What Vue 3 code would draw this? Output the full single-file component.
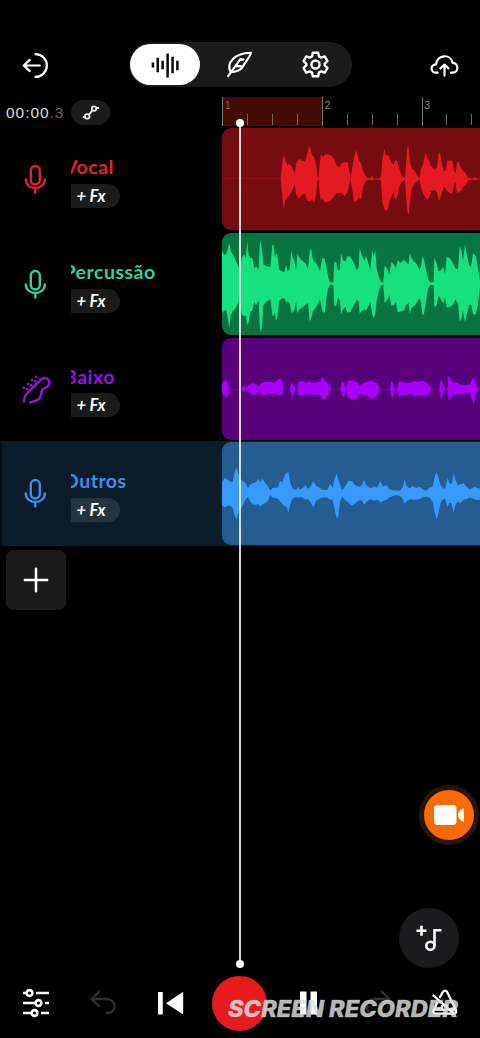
<script setup>
// Each waveform is a list of [x, top, bottom] samples, three units per pixel.
const tracks = [
  {
    name: 'Vocal', icon: 'mic', color: '#e4222f', shift: -6.5, clip: '#750c10', wave: '#e51a20', box: '6 9 774 306',
    points: [
      [6, 161, 162], [182, 161, 162], [186, 120, 205], [191, 91, 250], [196, 103, 225], [202, 122, 216], [208, 116, 210], [215, 124, 200], [221, 138, 186], [224, 146, 176],
      [229, 112, 208], [237, 102, 221], [245, 106, 210], [255, 110, 204], [260, 92, 226], [268, 61, 229], [276, 90, 222], [282, 96, 233], [288, 120, 208], [293, 158, 164],
      [296, 158, 164], [299, 118, 206], [303, 85, 226], [308, 96, 218], [313, 90, 230], [323, 87, 231], [333, 91, 225], [341, 100, 214], [349, 120, 205], [358, 127, 203],
      [365, 113, 204], [374, 112, 213], [383, 111, 199], [388, 142, 177], [392, 159, 164], [398, 122, 200], [402, 96, 228], [409, 75, 229], [416, 104, 216], [423, 115, 222],
      [430, 139, 183], [439, 157, 166], [450, 160, 163], [456, 153, 167], [460, 160, 163], [479, 160, 163], [483, 152, 170], [487, 105, 230], [493, 72, 251], [498, 92, 257],
      [504, 89, 251], [508, 98, 228], [515, 113, 211], [521, 120, 201], [525, 108, 222], [531, 107, 218], [538, 131, 183], [545, 153, 170], [555, 158, 165], [559, 106, 222],
      [562, 66, 258], [566, 68, 269], [571, 116, 221], [576, 131, 189], [584, 136, 176], [592, 153, 168], [599, 160, 163], [603, 132, 187], [609, 119, 205], [616, 83, 215],
      [622, 102, 224], [628, 105, 216], [633, 124, 199], [643, 132, 195], [651, 127, 201], [656, 82, 226], [660, 84, 222], [666, 119, 201], [672, 138, 184], [677, 137, 188],
      [682, 106, 199], [697, 107, 207], [702, 137, 178], [707, 146, 172], [711, 112, 204], [715, 110, 202], [722, 129, 198], [730, 138, 184], [738, 147, 180], [744, 158, 165], [762, 160, 163], [765, 156, 166], [770, 160, 163], [780, 160, 163],
    ],
  },
  {
    name: 'Percussão', icon: 'mic', color: '#32cf99', shift: -7, clip: '#08743f', wave: '#17e081', box: '6 8 774 307',
    points: [
      [6, 61, 250], [13, 73, 241], [19, 71, 240], [25, 49, 275], [28, 38, 294], [32, 60, 255], [40, 76, 240], [47, 90, 234], [54, 106, 220], [60, 123, 211], [65, 82, 252], [72, 72, 258],
      [78, 82, 255], [82, 33, 286], [86, 74, 276], [91, 84, 245], [97, 83, 240], [103, 115, 215], [108, 109, 226], [116, 117, 211], [119, 48, 285], [122, 30, 305], [126, 58, 292], [130, 102, 225], [140, 108, 214],
      [151, 110, 208], [157, 43, 256], [161, 45, 258], [165, 82, 247], [168, 69, 272], [172, 71, 263], [177, 118, 212], [186, 123, 204], [193, 125, 205], [198, 104, 216], [203, 124, 213], [209, 115, 219],
      [214, 59, 245], [218, 83, 248], [223, 91, 239], [228, 119, 212], [232, 71, 249], [237, 81, 239], [248, 93, 231], [257, 99, 223], [264, 118, 218], [269, 64, 274], [273, 54, 266], [279, 89, 243], [291, 103, 226],
      [300, 122, 207], [307, 82, 244], [314, 86, 248], [321, 119, 191], [325, 143, 172], [331, 157, 163], [340, 156, 165], [343, 93, 229], [349, 99, 225], [354, 121, 201], [360, 118, 210], [363, 69, 252], [369, 89, 238],
      [376, 94, 229], [382, 78, 247], [391, 79, 245], [401, 97, 226], [410, 119, 210], [416, 111, 213], [419, 53, 251], [425, 75, 242], [433, 91, 239], [439, 76, 241], [445, 99, 228], [451, 119, 215], [457, 60, 254], [461, 77, 263], [466, 62, 251],
      [470, 115, 214], [475, 135, 187], [483, 156, 165], [490, 156, 164], [494, 106, 219], [501, 114, 211], [508, 134, 194], [514, 95, 226], [522, 103, 224], [528, 114, 215], [533, 89, 246], [541, 98, 244], [552, 89, 240], [558, 95, 224],
      [566, 103, 218], [569, 68, 251], [575, 84, 234], [583, 95, 226], [590, 101, 218], [598, 119, 204], [603, 109, 216], [607, 78, 254], [612, 89, 251], [618, 116, 212], [624, 148, 175], [631, 157, 164], [641, 155, 164],
      [643, 83, 232], [650, 99, 225], [656, 124, 196], [662, 121, 206], [670, 109, 220], [675, 132, 200], [680, 79, 232], [689, 84, 230], [699, 99, 224], [706, 115, 208], [714, 118, 218], [719, 48, 273], [724, 59, 268],
      [729, 92, 240], [735, 42, 277], [740, 72, 253], [747, 105, 226], [753, 110, 222], [759, 69, 251], [767, 76, 253], [773, 110, 228], [780, 153, 170],
    ],
  },
  {
    name: 'Baixo', icon: 'guitar', color: '#9513dc', shift: -6.5, clip: '#59007b', wave: '#a800fd', box: '6 8 774 307',
    points: [
      [6, 150, 169], [11, 139, 181], [18, 134, 186], [24, 144, 180], [29, 161, 162], [65, 161, 162], [70, 148, 170], [76, 160, 163], [80, 154, 166], [90, 147, 173], [100, 144, 180], [108, 148, 179], [116, 153, 170],
      [124, 145, 177], [132, 142, 180], [143, 139, 176], [152, 140, 177], [165, 142, 176], [174, 133, 179], [182, 130, 180], [188, 141, 178], [190, 161, 162], [210, 161, 162], [213, 148, 174], [219, 143, 187], [224, 156, 168], [226, 161, 162], [233, 161, 162],
      [236, 139, 182], [248, 137, 181], [257, 143, 177], [267, 139, 177], [280, 143, 179], [293, 140, 178], [302, 137, 181], [307, 124, 192], [313, 136, 192], [321, 141, 183], [329, 149, 174], [333, 161, 162], [361, 161, 162], [366, 137, 181], [372, 144, 187], [378, 161, 162],
      [383, 139, 185], [393, 136, 191], [404, 138, 192], [413, 142, 188], [420, 153, 175], [429, 144, 180], [439, 141, 181], [447, 139, 186], [455, 136, 192], [463, 141, 187], [473, 145, 179], [480, 161, 162], [510, 161, 162], [514, 139, 187], [520, 143, 181], [525, 161, 162],
      [531, 158, 165], [537, 138, 187], [548, 142, 178], [563, 144, 179], [574, 142, 175], [583, 137, 184], [592, 140, 180], [602, 137, 179], [611, 138, 182], [622, 143, 179], [631, 153, 173], [634, 161, 162], [658, 161, 162], [663, 132, 193], [669, 146, 177], [675, 161, 162],
      [682, 161, 162], [686, 118, 196], [693, 134, 188], [700, 143, 180], [709, 142, 178], [720, 148, 177], [735, 150, 174], [750, 147, 175], [756, 134, 192], [761, 125, 207], [766, 141, 184], [773, 158, 165], [780, 161, 162],
    ],
  },
  {
    name: 'Outros', icon: 'mic', color: '#3d8ee9', shift: -7.5, clip: '#245d92', wave: '#3898fc', box: '6 12 774 306', selected: true,
    points: [
      [6, 133, 202], [14, 119, 208], [24, 126, 202], [32, 132, 203], [39, 129, 211], [44, 100, 233], [50, 89, 244], [54, 104, 228], [60, 119, 215], [66, 128, 208], [76, 134, 185], [84, 150, 176], [91, 139, 191],
      [100, 135, 200], [109, 131, 199], [116, 123, 199], [121, 133, 206], [127, 122, 199], [135, 133, 195], [142, 142, 191], [151, 157, 171], [158, 150, 178], [167, 149, 180], [174, 148, 182], [180, 128, 190], [187, 133, 198],
      [194, 111, 205], [200, 103, 207], [205, 103, 223], [211, 135, 198], [218, 153, 181], [229, 156, 176], [235, 147, 180], [240, 154, 176], [249, 150, 179], [256, 141, 186], [263, 152, 183], [272, 145, 193], [280, 129, 208], [288, 143, 189], [298, 149, 182], [306, 155, 178],
      [322, 156, 178], [330, 138, 185], [338, 149, 185], [343, 125, 209], [350, 106, 242], [355, 123, 235], [360, 139, 191], [366, 157, 175], [375, 146, 185], [385, 128, 194], [396, 129, 202], [407, 142, 195], [419, 146, 185],
      [426, 140, 188], [432, 124, 200], [438, 140, 193], [448, 148, 184], [456, 150, 185], [462, 145, 189], [471, 148, 184], [481, 129, 194], [489, 145, 189], [500, 141, 185], [508, 153, 178], [520, 157, 174], [529, 157, 171],
      [540, 158, 174], [549, 145, 183], [554, 124, 197], [560, 144, 190], [569, 151, 183], [577, 144, 184], [589, 150, 185], [600, 146, 183], [609, 154, 177], [619, 158, 176], [629, 148, 179], [638, 145, 191], [644, 116, 222], [650, 102, 244], [655, 119, 224], [662, 142, 194],
      [668, 149, 184], [675, 153, 181], [683, 120, 207], [688, 135, 193], [695, 138, 197], [701, 105, 224], [706, 124, 200], [714, 142, 190], [722, 138, 195], [731, 136, 185], [740, 147, 183], [750, 154, 178], [763, 147, 183], [773, 150, 186], [780, 151, 185],
    ],
  },
]

const outline = (points) =>
  [...points.map(([x, t]) => `${x},${t}`), ...[...points].reverse().map(([x, , b]) => `${x},${b}`)].join(' ')

const ticks = Array.from({ length: 11 }, (_, i) => i)
</script>

<template>
  <main class="studio">
    <header class="topbar">
      <svg class="icon back" viewBox="0 0 28 28"><path d="M14 2.3A11.8 11.8 0 0 1 14 25.9M1.8 14H18.5M8 8.2 1.8 14l6.2 5.8" /></svg>
      <nav class="tabs">
        <span class="tab active">
          <svg viewBox="0 0 30 26"><path d="M2 10.5v5M7 5.5v15M12 8.5v9M17.2 1v25M22.3 4.5v17M27.3 8.5v10" /></svg>
        </span>
        <span class="tab">
          <svg class="icon" viewBox="0 0 28 28"><path d="M2.2 26 15 8.5M4.6 21.5C.5 12.5 8 2.3 25.8 1.8 24.5 7 19.5 12 17 17q-4 5-11.5 4.5M10.5 15.5l6.8.8M14.5 9.5l3.5-.8" /></svg>
        </span>
        <span class="tab">
          <svg class="icon gear" viewBox="0 0 28 28"><path d="M11.2 1.8h5.6l.8 3.8 2.3 1.3 3.7-1.3 2.8 4.8-2.9 2.6v2l2.9 2.6-2.8 4.8-3.7-1.3-2.3 1.3-.8 3.8h-5.6l-.8-3.8-2.3-1.3-3.7 1.3-2.8-4.8L4.5 15v-2l-2.9-2.6 2.8-4.8 3.7 1.3 2.3-1.3z" /><circle cx="14" cy="14" r="4.2" /></svg>
        </span>
      </nav>
      <svg class="icon cloud" viewBox="0 0 30 24"><path d="M8 19.5H6.2C-.3 19.2.1 10.7 6.3 10.8 7 .5 21.5-.8 23.5 9.2c6.5.2 6.6 10.2.2 10.3h-2M15 22.5V11.7M10.7 15.2 15 11l4.3 4.2" /></svg>
    </header>

    <section class="ruler">
      <div class="readout">
        <span class="time">00:00<i>.3</i></span>
        <span class="automation"><svg viewBox="0 0 20 16"><path d="M1 13h2.4M8 10.3l3.7-5M16 3h3" /><circle cx="5.8" cy="12.4" r="2.5" /><circle cx="13.4" cy="3.6" r="2.5" /></svg></span>
      </div>
      <div class="bars">
        <div v-for="n in 3" :key="n" class="bar" :class="{ loop: n === 1 }"><span>{{ n }}</span></div>
        <div class="ticks"><b v-for="t in ticks" :key="t" :class="{ hidden: t % 4 === 0 }"></b></div>
      </div>
    </section>

    <section class="tracks">
      <article v-for="t in tracks" :key="t.name" class="track" :class="{ selected: t.selected }">
        <svg v-if="t.icon === 'mic'" class="glyph" viewBox="0 0 28 30" :stroke="t.color"><rect x="9.8" y="2" width="9" height="18.5" rx="4.5" /><path d="M4.8 15.5c0 11.3 19 11.3 19 0M14.3 24.5v4" /></svg>
        <svg v-else class="glyph" viewBox="0 0 28 30" :stroke="t.color"><path d="M3 27.5 4 22 7.3 18.3 20.5 5.2C25.5.8 31 8 26.5 12.6L21.3 15.5 19 24l-4.5 3-5.5 1.4" /><path d="M2.8 13.7h.1M7 10h.1M11 6h.1M15 2.6h.1M6 14.8l.5.5M10 11.2l.5.5M14 7l.5.5" /></svg>
        <div class="info">
          <h2 :style="{ color: t.color, marginLeft: t.shift + 'px' }">{{ t.name }}</h2>
          <span class="fx">+ Fx</span>
        </div>
        <div class="clip" :style="{ background: t.clip }">
          <svg :viewBox="t.box" preserveAspectRatio="none"><polygon :points="outline(t.points)" :fill="t.wave" /></svg>
        </div>
      </article>
    </section>

    <button class="add"><svg viewBox="0 0 24 24"><path d="M12 .8v22.4M.8 12h22.4" /></svg></button>

    <aside class="floating">
      <span class="camera"><svg viewBox="0 0 30 20"><rect width="22.5" height="20" rx="3.5" /><path d="M29.8 3v14Q24 14.5 24 10T29.8 3" /></svg></span>
      <span class="music"><svg viewBox="0 0 26 26"><path d="M.5 5.8h10M5.5.8v10M18.5 20.5V5.2h7" /><circle cx="14.4" cy="20.8" r="4.1" /></svg></span>
    </aside>

    <footer class="transport">
      <svg class="icon mixer" viewBox="0 0 26 28"><path d="M0 4h3.5M9.5 4M13 4h13M0 14h12M18 14M22 14h4M0 24h8.5M14.5 24M18 24h8" /><circle cx="6.5" cy="4" r="2.9" /><circle cx="15.5" cy="14" r="2.9" /><circle cx="11.5" cy="24" r="2.9" /></svg>
      <svg class="icon undo" viewBox="0 0 26 26"><path d="M9 2 1.5 9 9 16M2 9h14c11 0 11 14 2 14h-1" /></svg>
      <svg class="solid prev" viewBox="0 0 26 24"><rect y="1" width="4.8" height="22.5" rx=".6" /><path d="M25.2.8v22.8L8 12.2z" /></svg>
      <span class="record"></span>
      <svg class="solid pause" viewBox="0 0 20 24"><path d="M1 .5h6.5v23H1zM11.5.5H18v23h-6.5z" /></svg>
      <svg class="icon redo" viewBox="0 0 26 26"><path d="M17 2 24.5 9 17 16M24 9H10C-1 9-1 23 8 23h1" /></svg>
      <svg class="icon metronome" viewBox="0 0 26 26"><path d="m8 7 3-5.2q2-2.3 4 0l8.7 17.7q1.5 4-2 4.2H3.8q-3.5-.2-2-3.7L5 13M1.5 5.5 21 23M2 19.5h7M16 19.5h7" /><circle cx="12.5" cy="17.5" r="2.7" /></svg>
    </footer>

    <div class="playhead"></div>
    <svg class="watermark" viewBox="0 0 232 26"><text x="0" y="21" textLength="230" lengthAdjust="spacingAndGlyphs">SCREEN RECORDER</text></svg>
  </main>
</template>

<style>
body { background: #000; }
</style>

<style scoped>
.studio { position: relative; width: 480px; height: 1038px; padding-top: 42px; box-sizing: border-box; overflow: hidden; background: #000; color: #fff; font-family: Lato, sans-serif; display: flex; flex-direction: column; }
svg { display: block; overflow: visible; }
.icon { fill: none; stroke: #fff; stroke-width: 2.3; stroke-linecap: round; stroke-linejoin: round; }
.topbar { height: 45px; padding: 0 21px 0 22px; display: flex; align-items: center; justify-content: space-between; }
.back { width: 27px; height: 27px; margin-top: 2px; }
.tabs { width: 223px; height: 45px; margin-left: 1.5px; border-radius: 23px; background: #1b1b1c; display: flex; align-items: center; padding-left: 1px; box-sizing: border-box; }
.tab { width: 75px; display: flex; justify-content: center; }
.tab.active { width: 70px; height: 41px; align-items: center; border-radius: 21px; background: #fff; }
.tab.active svg { width: 29px; height: 26px; margin-left: 2px; fill: none; stroke: #0a0a0a; stroke-width: 2.6; }
.tab .icon { width: 27px; height: 27px; margin-left: 5px; }
.tab .gear { margin-left: 6px; stroke-width: 2.5; }
.cloud { width: 29px; height: 23px; margin-top: 2px; }
.ruler { height: 30px; margin-top: 10px; display: flex; }
.readout { width: 222px; display: flex; align-items: center; gap: 6px; padding-left: 6px; box-sizing: border-box; }
.time { width: 59px; white-space: nowrap; color: #ddd; font: 15.5px/25px "Liberation Sans", sans-serif; letter-spacing: .95px; }
.time i { font-style: normal; color: #666; }
.automation { width: 39px; height: 25px; border-radius: 13px; background: #1b1b1c; display: flex; align-items: center; justify-content: center; }
.automation svg { width: 18px; height: 15px; fill: none; stroke: #eee; stroke-width: 2; }
.bars { position: relative; flex: 1; display: flex; overflow: hidden; }
.bar { flex: 0 0 99.8px; height: 29px; box-sizing: border-box; border-left: 1.4px solid #777; padding: 3px 0 0 2px; color: #888; font: 10px/11px "Liberation Sans", sans-serif; }
.bar.loop { background: #450b06; }
.bar.loop span { color: #a35b57; }
.ticks { position: absolute; left: 0; bottom: 2px; display: flex; }
.ticks b { flex: 0 0 24.95px; height: 11px; box-sizing: border-box; border-left: 1px solid #77685b; }
.ticks .hidden { visibility: hidden; }
.tracks { display: grid; grid-auto-rows: 104.7px; height: 418.8px; }
.track { display: flex; align-items: center; }
.track.selected { background: #0b1c2a; border-left: 2px solid #050d15; }
.track.selected .glyph { margin-left: 19px; }
.glyph { width: 28px; height: 30px; margin: 0 0 0 21px; fill: none; stroke-width: 2.4; stroke-linecap: round; stroke-linejoin: round; }
.info { width: 151px; height: 104px; margin-left: 21.5px; overflow: hidden; }
h2 { margin: 28px 0 0; font-size: 19.5px; line-height: 24px; font-weight: 700; letter-spacing: .5px; white-space: nowrap; }
.fx { display: flex; align-items: center; width: 49px; height: 24px; margin-top: 4.5px; padding-left: 6px; box-sizing: border-box; border-radius: 0 12px 12px 0; background: #1b1b1c; font-size: 16.5px; font-weight: 700; font-style: italic; white-space: nowrap; letter-spacing: -.1px; }
.selected .fx { background: #233440; }
.clip { flex: 1; height: 102.2px; border-radius: 9px 0 0 9px; overflow: hidden; }
.clip svg { width: 258px; height: 102.2px; }
.add { width: 60px; height: 60px; margin: 4.5px 0 0 6px; padding: 0; border: 0; border-radius: 8px; background: #1b1b1c; display: grid; place-items: center; }
.add svg { width: 24px; height: 24px; stroke: #fff; stroke-width: 2.5; stroke-linecap: round; }
.floating { margin-top: 175px; display: flex; flex-direction: column; align-items: flex-end; gap: 62.5px; padding-right: 1px; }
.camera { width: 50px; height: 50px; border: 5px solid #2a1405; border-radius: 50%; background: #f96a06; display: grid; place-items: center; }
.camera svg { width: 30px; height: 20px; fill: #fff; }
.music { width: 60px; height: 60px; margin-right: 20px; border-radius: 50%; background: #1b1b1d; display: grid; place-items: center; }
.music svg { width: 26px; height: 26px; fill: none; stroke: #fff; stroke-width: 2.6; }
.transport { position: absolute; left: 0; top: 975px; width: 480px; height: 56px; display: grid; grid-template-columns: 68px 68px 67px 70px 70px 67px 68px; align-items: center; justify-items: center; padding-left: 1px; box-sizing: border-box; justify-content: start; }
.solid { fill: #fff; }
.mixer { width: 26px; height: 28px; margin-left: 1px; stroke-linecap: butt; stroke-width: 2.6; }
.undo { width: 26px; height: 26px; margin-left: 0; stroke: #303031; }
.redo { width: 26px; height: 26px; stroke: #303031; }
.prev { width: 26px; height: 24px; }
.record { width: 55px; height: 55px; border-radius: 50%; background: #e51b1e; }
.pause { width: 20px; height: 24px; }
.metronome { width: 26px; height: 26px; }
.playhead { position: absolute; left: 239px; top: 123px; width: 2px; height: 841px; background: rgba(255, 255, 255, .83); }
.playhead::before, .playhead::after { content: ""; position: absolute; left: -3px; width: 8px; height: 8px; border-radius: 50%; background: #fff; }
.playhead::before { top: -4px; }
.playhead::after { bottom: -4px; }
.watermark { position: absolute; left: 228px; top: 996px; width: 232px; height: 26px; fill: rgba(225, 225, 228, .82); stroke: rgba(225, 225, 228, .5); stroke-width: .5; font: italic 800 22.5px Inter, sans-serif; }
</style>
